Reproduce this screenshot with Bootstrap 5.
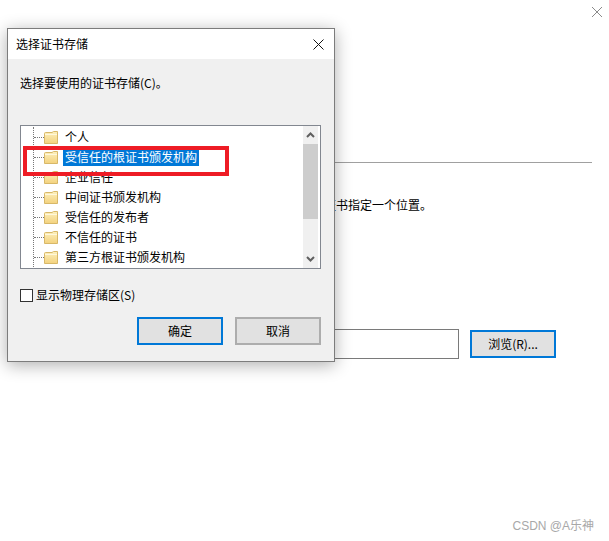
<!DOCTYPE html>
<html lang="zh-CN">
<head>
    <meta charset="UTF-8">
    <title>选择证书存储</title>
    <link href="https://cdn.jsdelivr.net/npm/bootstrap@5.3.0/dist/css/bootstrap.min.css" rel="stylesheet">
    <style>
        html, body { height: 100%; }
        body { background: #fff; color: #000; font: 12px/18px "Noto Sans CJK SC", "Liberation Sans", sans-serif; overflow: hidden; }
        svg { display: block; }

        /* wizard behind the dialog */
        .wiz-page { height: 541px; width: 609px; position: relative; padding: 7px 7px 0 0; }
        .wiz-rule { height: 1px; background: #a0a0a0; margin: 155px 10px 0 20px; }
        .wiz-text { width: 432px; text-align: right; margin-top: 33px; }
        .wiz-file { margin: 115px 46px 0 0; gap: 11px; }
        .wiz-input { width: 300px; height: 30px; background: #fff; border: 1px solid #7a7a7a; }
        .wiz-browse { width: 86px; }
        .wiz-mark { position: absolute; right: 15px; top: 517px; color: #a8a8a8; font-family: "Liberation Sans", "Noto Sans CJK SC", sans-serif; }

        .win-btn { height: 28px; padding: 0; border-radius: 0; background: #e1e1e1; border: 2px solid #adadad; color: #000; font-size: 12px; line-height: 20px; }
        .win-btn.is-default { border-color: #0078d7; }

        /* dialog */
        .cert-dialog { position: absolute; left: 7px; top: 28px; width: 328px; height: 334px; background: #f0f0f0; border: 1px solid #7c7c7c; box-shadow: 0 3px 16px rgba(0, 0, 0, .32); }
        .cert-title { height: 30px; background: #fff; padding: 0 10px 0 8px; }
        .cert-body { padding: 15px 13px 0 12px; }
        .store-box { height: 144px; margin-top: 33px; background: #fff; border: 1px solid #828790; overflow: hidden; }
        .store-scroll { flex: 1; overflow: hidden; padding-top: 1px; }
        .store-tree { list-style: none; margin: 10px 0 0 12px; padding: 0; border-left: 1px dotted #777; }
        .store-tree li { height: 20px; }
        .store-tree li:first-child { margin-top: -10px; }
        .store-link { width: 10px; border-top: 1px dotted #777; }
        .store-name { margin-left: 5px; padding: 0 2px; height: 18px; white-space: nowrap; }
        .store-name.is-picked { background: #0078d7; color: #fff; }
        .sb-track { width: 15px; margin-right: 2px; background: #f0f0f0; }
        .sb-arrow { height: 18px; }
        .sb-thumb { height: 75px; background: #cdcdcd; }
        .pick-mark { position: absolute; left: 15px; top: 117px; width: 206px; height: 30px; border: 4px solid #ee1c25; }
        .phys-row { margin-top: 17px; gap: 3px; }
        .phys-box { width: 13px; height: 13px; border: 1px solid #333; background: #fff; }
        .cert-actions { margin-top: 13px; gap: 12px; }
        .cert-actions .win-btn { width: 86px; }
    </style>
</head>
<body>

<div class="wiz-page">
    <div class="wiz-rule"></div>
    <div class="wiz-text">为证书指定一个位置。</div>
    <div class="wiz-file d-flex justify-content-end align-items-center">
        <div class="wiz-input"></div>
        <button type="button" class="btn win-btn is-default wiz-browse">浏览(R)...</button>
    </div>
    <div class="wiz-mark">CSDN @A乐神</div>
</div>

<!-- window close, top right -->
<svg class="position-absolute top-0 end-0 wiz-close" style="margin:7px 7px 0 0" width="10" height="10" viewBox="0 0 10 10">
    <path d="M0 0L10 10M10 0L0 10" stroke="#8a8a8a" stroke-width="1" fill="none"/>
</svg>

<!-- 选择证书存储 -->
<div class="cert-dialog">
    <div class="cert-title d-flex justify-content-between align-items-center">
        <span>选择证书存储</span>
        <svg width="11" height="11" viewBox="0 0 11 11"><path d="M.5 .5L10.5 10.5M10.5 .5L.5 10.5" stroke="#111" stroke-width="1" fill="none"/></svg>
    </div>
    <div class="cert-body">
        <div>选择要使用的证书存储(C)。</div>

        <div class="store-box d-flex">
            <div class="store-scroll">
                <ul class="store-tree">
                    <li class="d-flex align-items-center"><span class="store-link"></span><svg width="14" height="13" viewBox="0 0 14 13"><use href="#folder"/></svg><span class="store-name">个人</span></li>
                    <li class="d-flex align-items-center"><span class="store-link"></span><svg width="14" height="13" viewBox="0 0 14 13"><use href="#folder"/></svg><span class="store-name is-picked">受信任的根证书颁发机构</span></li>
                    <li class="d-flex align-items-center"><span class="store-link"></span><svg width="14" height="13" viewBox="0 0 14 13"><use href="#folder"/></svg><span class="store-name">企业信任</span></li>
                    <li class="d-flex align-items-center"><span class="store-link"></span><svg width="14" height="13" viewBox="0 0 14 13"><use href="#folder"/></svg><span class="store-name">中间证书颁发机构</span></li>
                    <li class="d-flex align-items-center"><span class="store-link"></span><svg width="14" height="13" viewBox="0 0 14 13"><use href="#folder"/></svg><span class="store-name">受信任的发布者</span></li>
                    <li class="d-flex align-items-center"><span class="store-link"></span><svg width="14" height="13" viewBox="0 0 14 13"><use href="#folder"/></svg><span class="store-name">不信任的证书</span></li>
                    <li class="d-flex align-items-center"><span class="store-link"></span><svg width="14" height="13" viewBox="0 0 14 13"><use href="#folder"/></svg><span class="store-name">第三方根证书颁发机构</span></li>
                    <li></li>
                </ul>
            </div>
            <div class="sb-track d-flex flex-column">
                <div class="sb-arrow d-flex align-items-center justify-content-center">
                    <svg width="9" height="6" viewBox="0 0 9 6"><path d="M1 5L4.5 1.5L8 5" stroke="#606060" stroke-width="2" fill="none"/></svg>
                </div>
                <div class="sb-thumb"></div>
                <div class="flex-grow-1"></div>
                <div class="sb-arrow d-flex align-items-center justify-content-center">
                    <svg width="9" height="6" viewBox="0 0 9 6"><path d="M1 1L4.5 4.5L8 1" stroke="#606060" stroke-width="2" fill="none"/></svg>
                </div>
            </div>
        </div>

        <div class="phys-row d-flex align-items-center">
            <span class="phys-box"></span>
            <span>显示物理存储区(S)</span>
        </div>

        <div class="cert-actions d-flex justify-content-end">
            <button type="button" class="btn win-btn is-default">确定</button>
            <button type="button" class="btn win-btn">取消</button>
        </div>
    </div>
    <div class="pick-mark"></div>
</div>

<svg width="0" height="0" class="position-absolute">
    <defs>
        <linearGradient id="folderFill" x1="0" y1="0" x2="0" y2="1">
            <stop offset="0" stop-color="#fdf0bd"/>
            <stop offset="1" stop-color="#f3d27e"/>
        </linearGradient>
        <g id="folder">
            <path d="M.5 12.5V2.5Q.5 1.500 1.500 1.500H8L9.500 .5H13.500V12.500Z" fill="url(#folderFill)" stroke="#d8b868"/>
            <path d="M1 3.500H13" stroke="#fff8dc" fill="none"/>
        </g>
    </defs>
</svg>

<script src="https://cdn.jsdelivr.net/npm/bootstrap@5.3.0/dist/js/bootstrap.bundle.min.js"></script>
</body>
</html>
